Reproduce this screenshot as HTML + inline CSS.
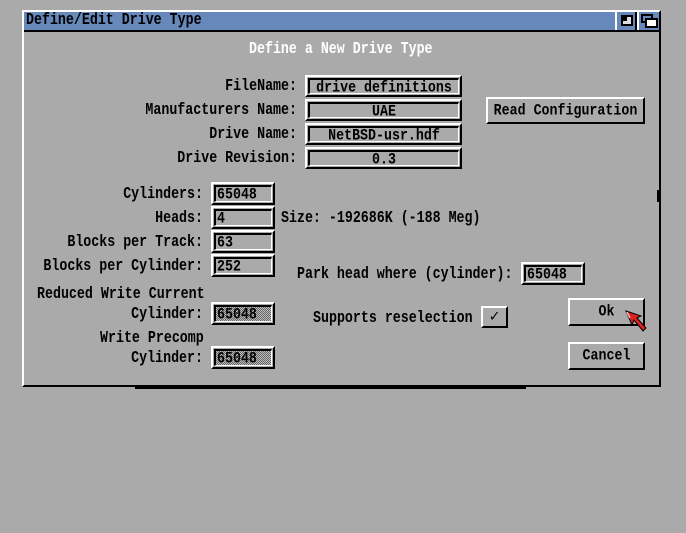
<!DOCTYPE html>
<html><head><style>
*{margin:0;padding:0;box-sizing:border-box}
body{width:686px;height:533px;background:#aaaaaa;position:relative;overflow:hidden;font-family:"Liberation Mono",monospace;font-size:13.3px;font-weight:bold;color:#000}
.a{position:absolute;white-space:nowrap;line-height:14px;transform:scaleY(1.25)}
.r{text-align:right}
.t{display:inline-block;transform:scaleY(1.2)}
.box{position:absolute;border-top:2px solid #fff;border-left:2px solid #fff;border-bottom:2px solid #000;border-right:2px solid #000}
.in{position:absolute;left:1px;top:1px;right:1px;bottom:1px;border-top:2px solid #000;border-left:2px solid #000;border-bottom:1px solid #fff;border-right:1px solid #fff;line-height:15px;white-space:nowrap;overflow:hidden}
.btn{position:absolute;border-top:2px solid #fff;border-left:2px solid #fff;border-bottom:2px solid #000;border-right:2px solid #000;text-align:center;line-height:20px}
.st{background-image:repeating-conic-gradient(#666 0 25%,#bbb 0 50%);background-size:2px 2px}
</style></head><body>
<div style="position:absolute;left:22px;top:10px;width:639px;height:377px;border-top:2px solid #fff;border-left:2px solid #fff;border-right:2px solid #000;border-bottom:2px solid #000;background:#aaa"></div>
<div style="position:absolute;left:24px;top:12px;width:635px;height:20px;background:#6688bb;border-bottom:2px solid #000"></div>
<div class="a" style="left:26px;top:13px">Define/Edit Drive Type</div>
<div style="position:absolute;left:615px;top:12px;width:22px;height:18px;border-left:2px solid #fff;border-right:2px solid #000">
 <div style="position:absolute;left:4px;top:3px;width:12px;height:11px;border:2px solid #000;background:#ddd"></div>
 <div style="position:absolute;left:4px;top:3px;width:6px;height:6px;background:#000"></div>
</div>
<div style="position:absolute;left:637px;top:12px;width:22px;height:18px;border-left:2px solid #fff">
 <div style="position:absolute;left:2px;top:2px;width:12px;height:9px;border:2px solid #000;background:#6688bb"></div>
 <div style="position:absolute;left:6px;top:6px;width:13px;height:10px;border:2px solid #000;background:#fff"></div>
</div>
<div style="position:absolute;left:135px;top:386px;width:391px;height:3px;background:#000"></div>
<div style="position:absolute;left:657px;top:190px;width:3px;height:12px;background:#000"></div>

<div class="a" style="left:249px;top:42px;color:#fff">Define a New Drive Type</div>

<div class="a r" style="left:100px;width:197px;top:79px">FileName:</div>
<div class="a r" style="left:100px;width:197px;top:103px">Manufacturers Name:</div>
<div class="a r" style="left:100px;width:197px;top:127px">Drive Name:</div>
<div class="a r" style="left:100px;width:197px;top:151px">Drive Revision:</div>
<div class="box" style="left:305px;top:75px;width:157px;height:22px"><div class="in" style="text-align:center"><span class="t">drive definitions</span></div></div>
<div class="box" style="left:305px;top:99px;width:157px;height:22px"><div class="in" style="text-align:center"><span class="t">UAE</span></div></div>
<div class="box" style="left:305px;top:123px;width:157px;height:22px"><div class="in" style="text-align:center"><span class="t">NetBSD-usr.hdf</span></div></div>
<div class="box" style="left:305px;top:147px;width:157px;height:22px"><div class="in" style="text-align:center"><span class="t">0.3</span></div></div>
<div class="btn" style="left:486px;top:97px;width:159px;height:27px;line-height:23px"><span class="t">Read Configuration</span></div>

<div class="a r" style="left:0;width:203px;top:187px">Cylinders:</div>
<div class="a r" style="left:0;width:203px;top:211px">Heads:</div>
<div class="a r" style="left:0;width:203px;top:235px">Blocks per Track:</div>
<div class="a r" style="left:0;width:203px;top:259px">Blocks per Cylinder:</div>
<div class="box" style="left:211px;top:182px;width:64px;height:23px"><div class="in" style="padding-left:1px"><span class="t">65048</span></div></div>
<div class="box" style="left:211px;top:206px;width:64px;height:23px"><div class="in" style="padding-left:1px"><span class="t">4</span></div></div>
<div class="box" style="left:211px;top:230px;width:64px;height:23px"><div class="in" style="padding-left:1px"><span class="t">63</span></div></div>
<div class="box" style="left:211px;top:254px;width:64px;height:23px"><div class="in" style="padding-left:1px"><span class="t">252</span></div></div>
<div class="a" style="left:281px;top:211px">Size: -192686K (-188 Meg)</div>

<div class="a" style="left:37px;top:287px">Reduced Write Current</div>
<div class="a r" style="left:0;width:203px;top:307px">Cylinder:</div>
<div class="a" style="left:100px;top:331px">Write Precomp</div>
<div class="a r" style="left:0;width:203px;top:351px">Cylinder:</div>
<div class="box" style="left:211px;top:302px;width:64px;height:23px"><div class="in st" style="padding-left:1px"><span class="t">65048</span></div></div>
<div class="box" style="left:211px;top:346px;width:64px;height:23px"><div class="in st" style="padding-left:1px"><span class="t">65048</span></div></div>

<div class="a" style="left:297px;top:267px">Park head where (cylinder):</div>
<div class="box" style="left:521px;top:262px;width:64px;height:23px"><div class="in" style="padding-left:1px"><span class="t">65048</span></div></div>
<div class="a" style="left:313px;top:311px">Supports reselection</div>
<div class="btn" style="left:481px;top:306px;width:27px;height:22px;line-height:18px;font-size:16px">✓</div>

<div class="btn" style="left:568px;top:298px;width:77px;height:28px;line-height:24px"><span class="t">Ok</span></div>
<div class="btn" style="left:568px;top:342px;width:77px;height:28px;line-height:24px"><span class="t">Cancel</span></div>

<svg style="position:absolute;left:624px;top:309px" width="26" height="28" viewBox="0 0 26 28">
<path d="M2 2 L8 16 L10 11 L19 22 L22 19 L13 9 L17 7 Z" fill="#dd2222" stroke="#000" stroke-width="1"/>
<path d="M3 3 L6 9" stroke="#fbb" stroke-width="1.5"/>
</svg>
</body></html>
